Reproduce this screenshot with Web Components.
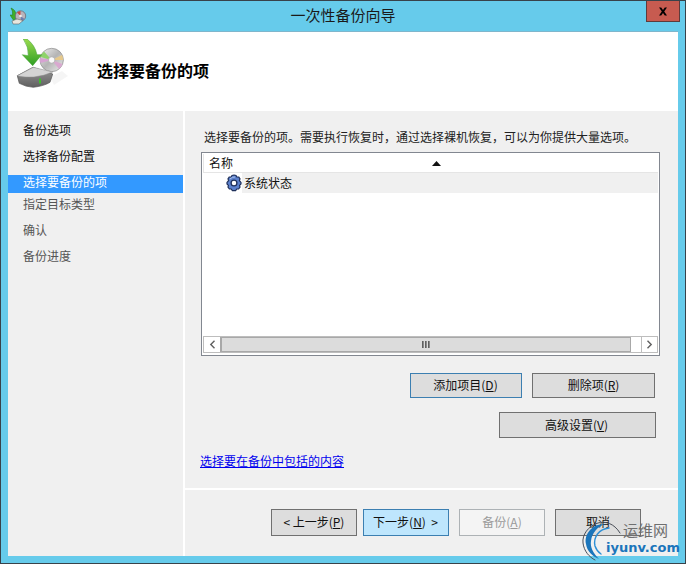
<!DOCTYPE html>
<html>
<head>
<meta charset="utf-8">
<style>
  html, body { margin: 0; padding: 0; }
  body { font: 12px "Noto Sans CJK SC", "Liberation Sans", sans-serif; width: 686px; height: 564px; overflow: hidden; }
</style>
</head>
<body>
<backup-wizard></backup-wizard>

<script>
const FONT = `"Noto Sans CJK SC", "Liberation Sans", sans-serif`;

class WinTitlebar extends HTMLElement {
  constructor() {
    super();
    this.attachShadow({ mode: "open" }).innerHTML = /* html */`
    <style>
      :host { display: flex; align-items: center; height: 30px; position: relative; }
      svg { margin: 0 0 0 2px; flex: none; }
      .title { flex: 1; text-align: center; font-size: 15px; color: #1a1a1a; padding: 0 0 2px 12px; line-height: 28px; }
      .close { flex: none; width: 34px; height: 21px; margin: -9px -2px 0 0; box-sizing: border-box; background: #c75b50; border: 1px solid #5e3b3b; border-top: 0; display: flex; align-items: center; justify-content: center; }
    </style>
    <svg width="18" height="18" viewBox="0 0 18 18">
      <path d="M1 1 Q6 3 6 8 L8 8 L4 14 L0 8 L2.6 8 Q3 4 1 1 Z" fill="#3fae2a" stroke="#1d7a1a" stroke-width=".5"/>
      <circle cx="10.500" cy="9" r="5.200" fill="#b9b4bb" stroke="#6d6d78" stroke-width=".8"/>
      <path d="M10.500 9 L7 5.500 A5 5 0 0 1 10.500 4 Z" fill="#c9483e"/>
      <path d="M10.500 9 L14.500 12 A5 5 0 0 1 11 14 Z" fill="#6d7fb0"/>
      <circle cx="10.500" cy="9" r="1.300" fill="#eee"/>
      <path d="M2 14 L7 12 L13 13.500 L9 17 L3 17 Z" fill="#e8e6dd" stroke="#666" stroke-width=".6"/>
    </svg>
    <div class="title"><slot></slot></div>
    <div class="close">
      <svg width="10" height="9" viewBox="0 0 10 9" style="margin:0"><path d="M1 .5 L3.2 .5 L5 3 L6.8 .5 L9 .5 L6.2 4.5 L9 8.5 L6.8 8.5 L5 6 L3.2 8.5 L1 8.5 L3.8 4.5 Z" fill="#000"/></svg>
    </div>`;
  }
}
customElements.define("win-titlebar", WinTitlebar);

class WizardStep extends HTMLElement {
  constructor() {
    super();
    this.attachShadow({ mode: "open" }).innerHTML = /* html */`
    <style>
      :host { display: block; height: 18px; line-height: 16px; padding-left: 15px; font-size: 12px; color: #555; }
      :host([done]) { color: #111; }
      :host([current]) { background: #3399ff; color: #fff; line-height: 14px; }
    </style>
    <slot></slot>`;
  }
}
customElements.define("wizard-step", WizardStep);

class WinButton extends HTMLElement {
  constructor() {
    super();
    this.attachShadow({ mode: "open" }).innerHTML = /* html */`
    <style>
      :host { display: flex; align-items: center; justify-content: center; box-sizing: border-box; height: 25px; padding-bottom: 2px; background: #dddddd; border: 1px solid #707070; font-size: 12px; color: #111; white-space: pre; }
      :host([focus]) { border-color: #3c7fb1; }
      :host([hot]) { background: #bee6fd; border-color: #3c7fb1; }
      :host([disabled]) { background: #f4f4f4; border-color: #adb2b5; color: #9a9a9a; }
    </style>
    <slot></slot>`;
  }
}
customElements.define("win-button", WinButton);

class WinScrollbar extends HTMLElement {
  constructor() {
    super();
    this.attachShadow({ mode: "open" }).innerHTML = /* html */`
    <style>
      :host { display: flex; height: 17px; box-sizing: border-box; background: #fff; border: 1px solid #bdbdbd; }
      .arrow { flex: none; width: 16px; display: flex; align-items: center; justify-content: center; }
      .arrow.r { width: 15px; border-left: 1px solid #bdbdbd; }
      .track { flex: 1; padding-right: 10px; display: flex; }
      .thumb { flex: 1; box-sizing: border-box; background: #dcdcdc; border: 1px solid #a8a8a8; border-left-width: 2px; display: flex; align-items: center; justify-content: center; gap: 1px; }
      .thumb i { width: 1px; height: 7px; background: #606060; box-shadow: 1px 0 0 #8a8a8a; margin-right: 1px; }
    </style>
    <div class="arrow"><svg width="7" height="9" viewBox="0 0 7 9"><path d="M5.5 .8 L1.8 4.5 L5.5 8.2" fill="none" stroke="#606060" stroke-width="1.4"/></svg></div>
    <div class="track"><div class="thumb"><i></i><i></i><i></i></div></div>
    <div class="arrow r"><svg width="7" height="9" viewBox="0 0 7 9"><path d="M1.5 .8 L5.2 4.5 L1.5 8.2" fill="none" stroke="#606060" stroke-width="1.4"/></svg></div>`;
  }
}
customElements.define("win-scrollbar", WinScrollbar);

class ItemList extends HTMLElement {
  constructor() {
    super();
    this.attachShadow({ mode: "open" }).innerHTML = /* html */`
    <style>
      :host { display: flex; flex-direction: column; box-sizing: border-box; width: 459px; height: 204px; background: #fff; border: 1px solid #828790; padding: 1px; font-size: 12px; color: #111; }
      .head { flex: none; height: 19px; box-sizing: border-box; border-bottom: 1px solid #e5e5e5; border-left: 1px solid #e5e5e5; display: flex; align-items: center; justify-content: space-between; padding: 0 217px 0 5px; line-height: 18px; }
      .row { flex: none; height: 20px; display: flex; align-items: center; padding-left: 23px; }
      .row span { flex: 1; background: #f0f0f0; line-height: 20px; padding-left: 2px; }
      .fill { flex: 1; }
      win-scrollbar { margin-bottom: 1px; }
    </style>
    <div class="head"><span>名称</span><svg width="9" height="5" viewBox="0 0 9 5"><path d="M4.5 0 L9 5 L0 5 Z" fill="#111"/></svg></div>
    <div class="row">
      <svg width="16" height="18" viewBox="0 0 16 18">
        <path d="M8 1 L10 1.500 L10.800 3 L12.800 3 L14 4.800 L13.400 6.600 L15 8.400 L15 10 L13.600 11.400 L14 13.200 L12.600 15 L10.800 15 L9.600 16.600 L6.400 16.600 L5.200 15 L3.400 15 L2 13.200 L2.400 11.400 L1 10 L1 8.400 L2.600 6.600 L2 4.800 L3.200 3 L5.200 3 L6 1.500 Z" fill="#5b80cc" stroke="#1e2f5a" stroke-width="1.200"/>
        <circle cx="8" cy="9" r="2.900" fill="#fff" stroke="#1e2f5a" stroke-width="1.300"/>
        <path d="M4 5 A6 6 0 0 1 9 3" fill="none" stroke="#a9c1ee" stroke-width="1"/>
      </svg>
      <span>系统状态</span>
    </div>
    <div class="fill"></div>
    <win-scrollbar></win-scrollbar>`;
  }
}
customElements.define("item-list", ItemList);

class BrandMark extends HTMLElement {
  constructor() {
    super();
    this.attachShadow({ mode: "open" }).innerHTML = /* html */`
    <style>
      :host { display: block; position: absolute; left: 580px; top: 514px; width: 105px; height: 49px; overflow: hidden; pointer-events: none; }
      svg { position: absolute; left: 0; top: 0; }
      .cn { position: absolute; left: 42px; top: 5px; font-size: 15px; line-height: 20px; color: #6f6f6f; }
      .en { position: absolute; left: 25px; top: 24px; font: bold 13px/18px "DejaVu Sans", sans-serif; color: #1b75bb; }
    </style>
    <svg width="60" height="49" viewBox="0 0 60 49" fill="none" stroke-linecap="round">
      <path d="M39 18 C33 8 24 6 17 8 C7 11 1 20 2 28 C3 36 8 42 14 45" stroke="#4a4f58" stroke-width="1"/>
      <path d="M24 9 C10 9 3 20 5 29 C6 36 11 41 18 44 C12 38 9 32 10 26 C11 18 16 12 24 9 Z" fill="#1b75bb"/>
      <path d="M28 13 C18 14 12 22 14 31 C15 34 17 37 20 39" stroke="#2c8fd6" stroke-width="1.400"/>
    </svg>
    <div class="cn">运维网</div>
    <div class="en">iyunv.com</div>`;
  }
}
customElements.define("brand-mark", BrandMark);

class BackupWizard extends HTMLElement {
  constructor() {
    super();
    this.attachShadow({ mode: "open" }).innerHTML = /* html */`
    <style>
      :host { display: flex; flex-direction: column; box-sizing: border-box; width: 686px; height: 564px; position: relative; background: #66cbeb; border: 1px solid #38424a; padding: 0 7px 7px 7px; font-family: ${FONT}; }
      .page { flex: 1; display: flex; flex-direction: column; background: #fff; border-top: 1px solid #7fb6cc; min-height: 0; }
      .banner { flex: none; height: 79px; display: flex; align-items: center; padding-left: 8px; gap: 24px; }
      .banner svg { align-self: flex-start; margin-top: 7px; flex: none; }
      .banner h1 { margin: -3px 0 0; font-size: 16px; font-weight: bold; color: #000; line-height: 22px; }
      .body { flex: 1; display: flex; gap: 2px; min-height: 0; }
      .side { flex: none; width: 175px; background: #f0f0f0; padding-top: 11px; display: flex; flex-direction: column; }
      .side wizard-step { margin-bottom: 8px; }
      .side wizard-step[current] { margin: 1px 0 3px; }
      .right { flex: 1; display: flex; flex-direction: column; gap: 2px; }
      .content { flex: 1; background: #f0f0f0; padding: 18px 18px 0 16px; display: flex; flex-direction: column; }
      .intro { font-size: 12px; line-height: 16px; color: #222; margin: 0 0 7px 3px; white-space: nowrap; }
      .btns { display: flex; justify-content: flex-end; gap: 10px; padding-right: 5px; margin-top: 17px; }
      .btns.second { padding-right: 4px; margin-top: 14px; }
      a { color: #0000ee; text-decoration: underline; font-size: 12px; line-height: 16px; margin: 15px 0 0 -1px; }
      .foot { flex: none; height: 66px; background: #f0f0f0; display: flex; justify-content: flex-end; gap: 10px; padding: 19px 37px 0 0; box-sizing: border-box; }
      .foot win-button { width: 86px; height: 27px; }
      .foot .prev { margin-right: -4px; word-spacing: -1.500px; }
      .foot .next { padding-right: 1px; }
      u { text-underline-offset: 1px; }
    </style>
    <win-titlebar>一次性备份向导</win-titlebar>
    <div class="page">
      <div class="banner">
        <svg width="57" height="50" viewBox="0 0 57 50">
          <defs>
            <linearGradient id="d" x1="0" x2="1" y1="0" y2="1"><stop offset="0" stop-color="#f2f2f2"/><stop offset=".5" stop-color="#b4b4b4"/><stop offset="1" stop-color="#ececec"/></linearGradient>
            <linearGradient id="h" x1="0" x2="0" y1="0" y2="1"><stop offset="0" stop-color="#9a9a9a"/><stop offset="1" stop-color="#5f5f5f"/></linearGradient>
            <linearGradient id="g" x1="0" x2="0" y1="0" y2="1"><stop offset="0" stop-color="#9adb4e"/><stop offset="1" stop-color="#2f9e24"/></linearGradient>
          </defs>
          <path d="M34 38 L46 32 L52 37 L38 46 Z" fill="#000" opacity=".04"/>
          <circle cx="35.700" cy="21" r="11.700" fill="url(#d)" stroke="#8d8d8d" stroke-width=".7"/>
          <path d="M35.700 21 L24.500 18 A11.500 11.500 0 0 1 28 12.500 Z" fill="#8fd36a"/>
          <path d="M35.700 21 L24.500 24 A11.500 11.500 0 0 1 24.200 19 Z" fill="#d7a3d2"/>
          <path d="M35.700 21 L46.500 25 A11.500 11.500 0 0 1 43 30 Z" fill="#d9a9d0"/>
          <path d="M35.700 21 L46 16 A11.500 11.500 0 0 1 47.200 21 Z" fill="#e6c98c"/>
          <circle cx="35.700" cy="21" r="3.200" fill="#fafafa" stroke="#9a9a9a" stroke-width=".6"/>
          <path d="M1.300 36.700 L3.300 44.300 Q10 48 17.300 48.300 Q28 47 34 43.300 L36.700 35 L17 28.300 Z" fill="url(#h)" stroke="#555" stroke-width=".7"/>
          <path d="M1.300 36.700 L17.300 28.300 L36.700 33 Q28 37 18 38 Q7 38.500 1.300 36.700 Z" fill="#d4d4d4" stroke="#8a8a8a" stroke-width=".5"/>
          <rect x="23" y="39.500" width="2" height="5" fill="#3fbf2e"/>
          <path d="M7.300 0 L11 0 Q19 6 21 15.700 L25.700 15.700 L16.700 26.700 L6.300 15.700 L12.300 16.700 Q12.800 8 7.300 0 Z" fill="url(#g)" stroke="#3a9a2c" stroke-width=".5"/>
        </svg>
        <h1>选择要备份的项</h1>
      </div>
      <div class="body">
        <div class="side">
          <wizard-step done>备份选项</wizard-step>
          <wizard-step done>选择备份配置</wizard-step>
          <wizard-step current>选择要备份的项</wizard-step>
          <wizard-step>指定目标类型</wizard-step>
          <wizard-step>确认</wizard-step>
          <wizard-step>备份进度</wizard-step>
        </div>
        <div class="right">
          <div class="content">
            <p class="intro">选择要备份的项。需要执行恢复时，通过选择裸机恢复，可以为你提供大量选项。</p>
            <item-list></item-list>
            <div class="btns">
              <win-button focus style="width:112px;padding-right:1px">添加项目(<u>D</u>)</win-button>
              <win-button style="width:123px">删除项(<u>R</u>)</win-button>
            </div>
            <div class="btns second">
              <win-button style="width:157px;height:26px;padding-right:2px">高级设置(<u>V</u>)</win-button>
            </div>
            <a href="#">选择要在备份中包括的内容</a>
          </div>
          <div class="foot">
            <win-button class="prev">&lt;  上一步(<u>P</u>)</win-button>
            <win-button class="next" hot>下一步(<u>N</u>)  &gt;</win-button>
            <win-button disabled>备份(<u>A</u>)</win-button>
            <win-button>取消</win-button>
          </div>
        </div>
      </div>
    </div>
    <brand-mark></brand-mark>`;
  }
}
customElements.define("backup-wizard", BackupWizard);
</script>
</body>
</html>
